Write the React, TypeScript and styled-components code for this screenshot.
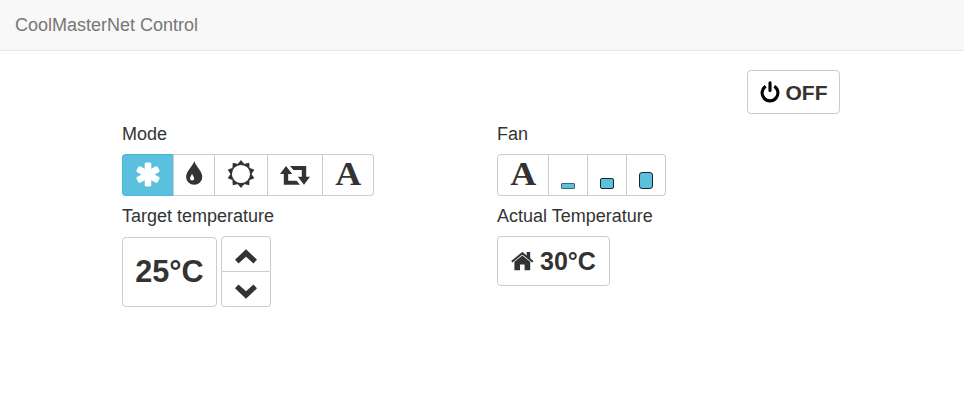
import React from "react";
import styled, { createGlobalStyle } from "styled-components";

const GlobalStyle = createGlobalStyle`
  * { box-sizing: border-box; }
  body {
    margin: 0;
    background: #fff;
    color: #333;
    font: 18px/26px "Liberation Sans", Arial, sans-serif;
  }
  svg { display: block; flex: none; }
`;

const Navbar = styled.header`
  height: 51px;
  padding: 12px 15px;
  background: #f8f8f8;
  border-bottom: 1px solid #e7e7e7;
  color: #777;
`;

const Container = styled.main`
  width: 750px;
  margin: 0 92px 0 122px;
  padding-top: 19px;
`;

const PowerRow = styled.div`
  display: flex;
  justify-content: flex-end;
  width: 718px;
`;

const Columns = styled.div`
  display: grid;
  grid-template-columns: 375px 375px;
`;

const Label = styled.div`
  margin: 7px 0;
  height: 26px;
`;

const Button = styled.button<{ $w: number; $h: number; $size?: number; $align?: string; $pad?: string }>`
  display: flex;
  align-items: ${(p) => p.$align ?? "center"};
  justify-content: center;
  gap: 6px;
  width: ${(p) => p.$w}px;
  height: ${(p) => p.$h}px;
  padding: ${(p) => p.$pad ?? "0"};
  border: 1px solid #ccc;
  border-radius: 4px;
  background: #fff;
  color: #333;
  font: bold ${(p) => p.$size ?? 18}px/1 "Liberation Sans", Arial, sans-serif;
  white-space: nowrap;
`;

const ButtonGroup = styled.div<{ $vertical?: boolean }>`
  display: flex;
  flex-direction: ${(p) => (p.$vertical ? "column" : "row")};

  ${Button}:not(:first-child) {
    ${(p) => (p.$vertical ? "border-top: 0; border-top-left-radius: 0;" : "border-left: 0; border-top-left-radius: 0;")}
    ${(p) => (p.$vertical ? "border-top-right-radius: 0;" : "border-bottom-left-radius: 0;")}
  }
  ${Button}:not(:last-child) {
    border-bottom-right-radius: 0;
    ${(p) => (p.$vertical ? "border-bottom-left-radius: 0;" : "border-top-right-radius: 0;")}
  }
`;

const ActiveButton = styled(Button)`
  background: #5bc0de;
  border-color: #46b8da #ccc #46b8da #46b8da;
  color: #fff;
`;

const Letter = styled.span`
  font: bold 34px/36px "Liberation Serif", "Times New Roman", serif;
  transform: scaleX(1.06);
`;

const FanLevel = styled.span<{ $h: number }>`
  width: 14px;
  height: ${(p) => p.$h}px;
  margin-bottom: 6px;
  border: 1px solid ${(p) => (p.$h < 8 ? "#3c6874" : "#1b262a")};
  border-radius: ${(p) => (p.$h > 12 ? 3 : p.$h > 8 ? 2 : 1)}px;
  background: #5bc0de;
`;

const TempRow = styled.div`
  display: flex;
  align-items: flex-end;
  gap: 4px;
`;

const Asterisk = () => (
  <svg width="24" height="25" viewBox="-12 -12.5 24 25" fill="currentColor">
    {[0, 60, 120].map((a) => (
      <rect key={a} x="-3.3" y="-12.1" width="6.6" height="24.2" rx="1.7" transform={`rotate(${a})`} />
    ))}
  </svg>
);

const Drop = () => (
  <svg width="17" height="24" viewBox="0 0 17 24" fill="currentColor">
    <path
      fillRule="evenodd"
      d="M8.3 0C9.2 4.5 16.3 10 16.3 16A8.1 7.7 0 0 1 .1 16C.1 10 7.4 4.5 8.3 0ZM6 12.5C5.5 14.5 4 15.8 4 17.4A2.1 2.1 0 0 0 8.2 17.4C8.2 15.8 6.5 14.5 6 12.5Z"
    />
  </svg>
);

const Sun = () => (
  <svg width="28" height="28" viewBox="-14 -14 28 28" fill="currentColor">
    {Array.from({ length: 10 }, (_, i) => (
      <path key={i} d="M-3.5-9.7L0-14L3.5-9.7Z" transform={`rotate(${i * 36})`} />
    ))}
    <circle r="9.8" fill="none" stroke="currentColor" strokeWidth="1.4" />
  </svg>
);

const Loop = () => (
  <svg width="30" height="19" viewBox="0 0 30 19" fill="currentColor">
    <path d="M6 0L12.2 8H8.2V14.8H16.6L20 18.8H3.8V8H0Z" />
    <path d="M24 18.8L17.8 10.8H21.8V4H13.4L10 0H26.2V10.8H30Z" />
  </svg>
);

const Power = () => (
  <svg width="20" height="22" viewBox="0 0 20 22" fill="none" stroke="#000" strokeWidth="3.1">
    <path d="M5.7 5.3A7.9 7.9 0 1 0 14.3 5.3" />
    <path d="M10 1.9V9.5" strokeLinecap="round" />
  </svg>
);

const Home = () => (
  <svg width="23" height="19" viewBox="0 0 23 19" fill="currentColor">
    <path d="M.8 9.7L11.3 1.2L21.8 9.7" fill="none" stroke="currentColor" strokeWidth="2" />
    <path d="M15.7 0H19.2V7.5L15.7 4.5ZM11.3 3.4L19.2 9.8V18.3H13.6V12.4H9V18.3H3.4V9.8Z" />
  </svg>
);

const Chevron = ({ down = false }: { down?: boolean }) => (
  <svg width="22" height="15" viewBox="0 0 22 15" fill="currentColor">
    <path d="M11 .3L22 10.7L18.5 14.4L11 7.8L3.5 14.4L0 10.7Z" transform={down ? "rotate(180 11 7.5)" : undefined} />
  </svg>
);

export default function App() {
  return (
    <>
      <GlobalStyle />
      <Navbar>CoolMasterNet Control</Navbar>
      <Container>
        <PowerRow>
          <Button $w={93} $h={44} $size={21}>
            <Power />
            <span>OFF</span>
          </Button>
        </PowerRow>
        <Columns>
          <section>
            <Label>Mode</Label>
            <ButtonGroup>
              <ActiveButton $w={52} $h={42} $pad="0 0 2px"><Asterisk /></ActiveButton>
              <Button $w={41} $h={42} $pad="0 0 4px"><Drop /></Button>
              <Button $w={53} $h={42} $pad="0 0 2px"><Sun /></Button>
              <Button $w={55} $h={42}><Loop /></Button>
              <Button $w={51} $h={42} $pad="0 0 2px"><Letter>A</Letter></Button>
            </ButtonGroup>
            <Label>Target temperature</Label>
            <TempRow>
              <Button $w={95} $h={70} $size={30.6} $pad="0 0 2px">25°C</Button>
              <ButtonGroup $vertical>
                <Button $w={50} $h={36} $pad="4px 0 0"><Chevron /></Button>
                <Button $w={50} $h={35} $pad="4px 0 0"><Chevron down /></Button>
              </ButtonGroup>
            </TempRow>
          </section>
          <section>
            <Label>Fan</Label>
            <ButtonGroup>
              <Button $w={52} $h={42} $pad="0 0 2px"><Letter>A</Letter></Button>
              <Button $w={39} $h={42} $align="flex-end"><FanLevel $h={6} /></Button>
              <Button $w={39} $h={42} $align="flex-end"><FanLevel $h={11} /></Button>
              <Button $w={39} $h={42} $align="flex-end"><FanLevel $h={17} /></Button>
            </ButtonGroup>
            <Label>Actual Temperature</Label>
            <Button $w={113} $h={50} $size={25}>
              <Home />
              <span>30°C</span>
            </Button>
          </section>
        </Columns>
      </Container>
    </>
  );
}
